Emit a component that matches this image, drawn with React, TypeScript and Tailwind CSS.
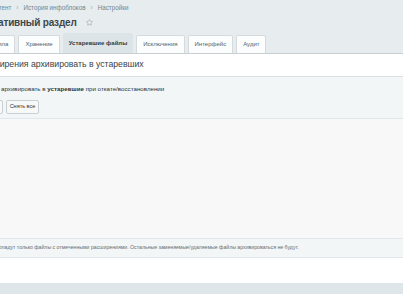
import { Star } from 'lucide-react';

const tabs = ['Правила', 'Хранение', 'Устаревшие файлы', 'Исключения', 'Интерфейс', 'Аудит'];
const activeTab = 'Устаревшие файлы';

export default function App() {
    return (
        <div className="w-[403px] h-[294px] overflow-hidden bg-[#e7ecee] font-['Liberation_Sans',Arial,sans-serif] flex flex-col">
            {/* Breadcrumbs */}
            <div className="flex items-center gap-[5px] h-[13px] mt-[1px] -ml-[12px] text-[6.3px] text-[#6f8893] whitespace-nowrap">
                <span>Контент</span>
                <span className="text-[#9aa9b0]">›</span>
                <span>История инфоблоков</span>
                <span className="text-[#9aa9b0]">›</span>
                <span>Настройки</span>
            </div>

            {/* Title */}
            <div className="flex items-center h-[17px] -ml-[56px] whitespace-nowrap">
                <h1 className="text-[10px] font-bold tracking-[-0.2px] text-[#3d474c] leading-none">Административный раздел</h1>
                <Star className="w-[7px] h-[7px] ml-[9px] text-[#9aa6ab]" strokeWidth={2} />
            </div>

            {/* Tabs */}
            <div className="flex items-end gap-[3px] h-[23px] -ml-[23px] border-b border-[#c8cfd2] whitespace-nowrap">
                {tabs.map((tab) =>
                    tab === activeTab ? (
                        <div
                            key={tab}
                            className="h-[20px] px-[6px] flex items-center bg-[#dde4e7] rounded-t-[2px] text-[6px] font-bold text-[#333b3f]"
                        >
                            {tab}
                        </div>
                    ) : (
                        <div
                            key={tab}
                            className="h-[18px] px-[6px] flex items-center bg-[#fcfdfd] border border-b-0 border-[#d4dadd] rounded-t-[2px] text-[6px] text-[#55636a]"
                        >
                            {tab}
                        </div>
                    )
                )}
            </div>

            {/* Section heading */}
            <div className="h-[23px] bg-white border-b border-[#dadfe1] flex items-center -ml-[22px] whitespace-nowrap">
                <span className="text-[8.7px] text-[#3a4246]">Расширения архивировать в устаревших</span>
            </div>

            {/* Options */}
            <div className="bg-[#f2f6f7] border-b border-[#e1e6e8] pt-[6px] pb-[4px]">
                <div className="h-[12px] flex items-center ml-[1px] text-[6.2px] text-[#333] whitespace-nowrap">
                    архивировать в&nbsp;<b>устаревшие</b>&nbsp;при откате/восстановлении
                </div>
                <div className="flex gap-[3px] mt-[5px] -ml-[40px]">
                    <button className="h-[14px] px-[3px] bg-[#f7f9f9] border border-[#c9d0d3] rounded-[2px] text-[5.5px] text-[#333] leading-none">
                        Отметить все
                    </button>
                    <button className="h-[14px] px-[3px] bg-[#f7f9f9] border border-[#c9d0d3] rounded-[2px] text-[5.5px] text-[#333] leading-none">
                        Снять все
                    </button>
                </div>
            </div>

            {/* Empty list area */}
            <div className="h-[120px] bg-[#f8f8f8] border-b border-[#e3e7e9]" />

            {/* Note */}
            <div className="h-[19px] bg-[#f3f6f7] border-b border-[#e3e7e9] flex items-center -ml-[4px] whitespace-nowrap">
                <span className="text-[5.2px] text-[#666e72]">
                    попадут только файлы с отмеченными расширениями. Остальные заменяемые/удаляемые файлы архивироваться не будут.
                </span>
            </div>

            {/* Footer */}
            <div className="h-[25px] bg-white" />
            <div className="flex-1 bg-[#dfe6e9]" />
        </div>
    );
}
